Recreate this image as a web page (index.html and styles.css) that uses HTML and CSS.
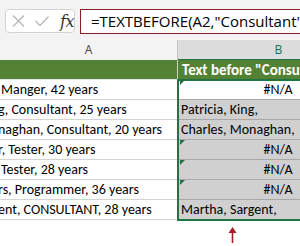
FILE: index.html
```html
<!DOCTYPE html>
<html lang="en">
<head>
    <meta charset="UTF-8">
    <title>TEXTBEFORE</title>
    <link rel="stylesheet" href="styles.css">
</head>
<body>
    <!-- Formula bar -->
    <div class="toolbar">
        <div class="namebox"></div>
        <div class="grip"><span></span><span></span><span></span></div>
        <div class="fxbox">
            <svg class="ico" width="13" height="12" viewBox="0 0 13 12">
                <path d="M1 0.5 L12 11.5 M12 0.5 L1 11.5" stroke="#b4b4b4" stroke-width="1.2" fill="none"/>
            </svg>
            <svg class="ico" width="14" height="10" viewBox="0 0 14 10">
                <path d="M0.5 5 L5 9.5 L13.5 0.5" stroke="#b4b4b4" stroke-width="1.2" fill="none"/>
            </svg>
            <span class="fx">fx</span>
        </div>
        <div class="formula">=TEXTBEFORE(A2,"Consultant")</div>
    </div>

    <!-- Column letters -->
    <div class="colheads">
        <div class="colhead">A</div>
        <div class="colhead selected">B</div>
    </div>

    <!-- Cells -->
    <div class="sheet">
        <div class="cell head"></div>
        <div class="cell head head-b">Text before "Consultant"</div>

        <div class="cell a">Manger, 42 years</div>
        <div class="cell b active err">#N/A</div>

        <div class="cell a clip">g, Consultant, 25 years</div>
        <div class="cell b">Patricia, King,</div>

        <div class="cell a clip">naghan, Consultant, 20 years</div>
        <div class="cell b">Charles, Monaghan,</div>

        <div class="cell a clip">r, Tester, 30 years</div>
        <div class="cell b err">#N/A</div>

        <div class="cell a">Tester, 28 years</div>
        <div class="cell b err">#N/A</div>

        <div class="cell a clip">rs, Programmer, 36 years</div>
        <div class="cell b err">#N/A</div>

        <div class="cell a clip">ent, CONSULTANT, 28 years</div>
        <div class="cell b last">Martha, Sargent,</div>

        <div class="selection"></div>
    </div>

    <!-- Pointer arrow -->
    <div class="pointer">
        <svg width="9" height="16" viewBox="0 0 9 16">
            <path d="M4.5 0 L8.5 6 L5.3 6 L5.3 16 L3.7 16 L3.7 6 L0.5 6 Z" fill="#a31d2b"/>
        </svg>
    </div>
</body>
</html>
```

FILE: styles.css
```css
/* General */
body {
    margin: 0;
    width: 300px;
    height: 246px;
    overflow: hidden;
    background: #fff;
    font-family: Carlito, Lato, 'Liberation Sans', sans-serif;
}

/* Formula bar */
.toolbar {
    height: 40px;
    background: #f3f3f3;
    display: flex;
    align-items: flex-start;
    padding-top: 9px;
    box-sizing: border-box;
}
.namebox {
    width: 22px;
    height: 24px;
    margin-left: -20px;
    background: #fff;
    border: 1px solid #d4d4d4;
    border-radius: 4px;
    box-sizing: border-box;
}
.grip {
    display: flex;
    flex-direction: column;
    gap: 2px;
    margin: 7px 8px 0 10px;
}
.grip span {
    width: 2px;
    height: 2px;
    background: #8a8a8a;
}
.fxbox {
    width: 74px;
    height: 24px;
    background: #fff;
    border: 1px solid #d4d4d4;
    border-radius: 4px;
    box-sizing: border-box;
    display: flex;
    align-items: center;
    padding-left: 6px;
}
.fxbox .ico {
    margin-right: 10px;
}
.fx {
    font-family: 'DejaVu Serif', 'Liberation Serif', serif;
    font-style: italic;
    font-size: 16px;
    color: #333;
    margin-left: 1px;
    letter-spacing: -0.5px;
}
.formula {
    margin-left: 5px;
    flex: 1;
    height: 25px;
    min-width: 220px;
    border: 1px solid #8b1c24;
    border-right: none;
    background: #fff;
    box-sizing: border-box;
    font-family: 'Open Sans', 'Noto Sans', sans-serif;
    font-size: 15px;
    line-height: 23px;
    padding-left: 10px;
    white-space: nowrap;
    overflow: hidden;
    color: #000;
}

/* Column letters */
.colheads {
    display: grid;
    grid-template-columns: 177px 202px;
    height: 20px;
    background: #f3f3f3;
}
.colhead {
    font-family: 'Open Sans', 'Noto Sans', sans-serif;
    font-size: 12px;
    color: #444;
    text-align: center;
    line-height: 19px;
    border-bottom: 1px solid #d0d0d0;
    box-sizing: border-box;
}
.colhead.selected {
    background: #dcdcdc;
    color: #217346;
    border-left: 1px solid #c4c4c4;
    border-bottom: 2px solid #217346;
}

/* Cells */
.sheet {
    position: relative;
    display: grid;
    grid-template-columns: 177px 202px;
    grid-auto-rows: 20px;
}
.cell {
    font-size: 14px;
    line-height: 20px;
    color: #000;
    white-space: nowrap;
    overflow: hidden;
    border-bottom: 1px solid #d4d4d4;
    box-sizing: border-box;
    position: relative;
}
.cell.head {
    background: #548235;
    border-bottom: 1px solid #e6e6e6;
    color: #fff;
    font-size: 15px;
    font-weight: bold;
    padding-left: 4px;
}
.cell.head-b {
    border-left: 1px solid #c8d4c0;
}
.cell.a {
    padding-left: 1px;
}
.cell.a.clip {
    text-indent: -3px;
}
.cell.b {
    background: #d0d0d0;
    border-bottom-color: #a8a8a8;
    padding-left: 4px;
}
.cell.b.err {
    text-align: center;
    padding-left: 0;
}
.cell.b.active {
    background: #fff;
}
.cell.b.last {
    border-bottom: none;
}

/* Error markers on #N/A cells */
.cell.err::before {
    content: "";
    position: absolute;
    left: 3px;
    top: 0;
    border-top: 5px solid #1e7145;
    border-right: 5px solid transparent;
}

/* Selected range outline */
.selection {
    position: absolute;
    left: 177px;
    top: 19px;
    width: 210px;
    height: 142px;
    box-sizing: border-box;
    border: 2px solid #217346;
    pointer-events: none;
}

/* Arrow under the range */
.pointer {
    display: flex;
    padding: 7px 0 0 228px;
}
```
